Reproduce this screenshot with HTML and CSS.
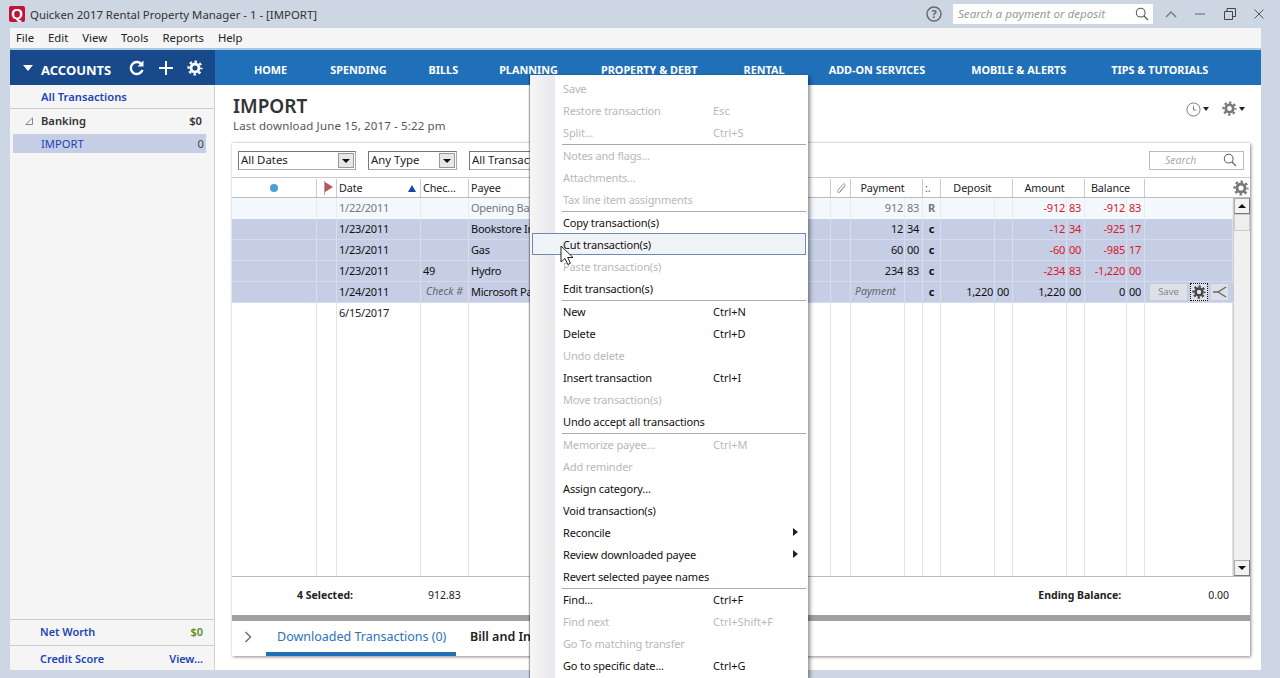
FILE: index.html
```html
<!DOCTYPE html>
<html lang="en">
<head>
<meta charset="utf-8">
<title>Quicken 2017 Rental Property Manager</title>
<link rel="stylesheet" href="styles.css">
</head>
<body>
<svg class="defs" width="0" height="0" aria-hidden="true">
  <symbol id="gear" viewBox="0 0 20 20">
    <circle cx="10" cy="10" r="5" fill="none" stroke="currentColor" stroke-width="3.6"/>
    <circle cx="10" cy="10" r="8" fill="none" stroke="currentColor" stroke-width="3" stroke-dasharray="3.14 3.14" stroke-dashoffset="1.57"/>
  </symbol>
  <symbol id="lens" viewBox="0 0 16 16">
    <circle cx="6.5" cy="6.5" r="5" fill="none" stroke="currentColor" stroke-width="1.2"/>
    <path d="M10 10l5 5" stroke="currentColor" stroke-width="1.5" fill="none"/>
  </symbol>
</svg>

<header class="titlebar">
  <span class="logo">Q</span>
  <span class="title">Quicken 2017 Rental Property Manager - 1 - [IMPORT]</span>
  <svg class="help" width="16" height="16" viewBox="0 0 16 16"><circle cx="8" cy="8" r="7" fill="none" stroke="#666" stroke-width="1.4"/><text x="8" y="12" text-anchor="middle" class="help-q">?</text></svg>
  <div class="globalsearch"><span>Search a payment or deposit</span><svg class="lens" width="14" height="14"><use href="#lens"/></svg></div>
  <svg class="winbtn up" width="14" height="10" viewBox="0 0 14 10"><path d="M2 8l5-5 5 5" fill="none" stroke="#777" stroke-width="1.4"/></svg>
  <svg class="winbtn min" width="10" height="10" viewBox="0 0 10 10"><path d="M0 5h10" stroke="#666"/></svg>
  <svg class="winbtn res" width="12" height="12" viewBox="0 0 12 12"><path d="M.5 3.5h8v8h-8zM3 3V.5h8.500v8H9" fill="none" stroke="#444"/></svg>
  <svg class="winbtn cls" width="10" height="10" viewBox="0 0 10 10"><path d="M.5.5l9 9M9.500.5l-9 9" stroke="#555"/></svg>
</header>

<nav class="menubar"><span>File</span><span>Edit</span><span>View</span><span>Tools</span><span>Reports</span><span>Help</span></nav>

<div class="shell">
  <div class="acc-head">
    <span class="tri-down"></span>
    <span class="acc-label">ACCOUNTS</span>
    <svg class="acc-ic refresh" width="18" height="18" viewBox="0 0 18 18"><path d="M14.500 11a6 6 0 1 1-.8-5.500" fill="none" stroke="#fff" stroke-width="2.400"/><path d="M15.500 1.500v6h-6z" fill="#fff"/></svg>
    <svg class="acc-ic plus" width="16" height="16" viewBox="0 0 16 16"><path d="M8 1v14M1 8h14" stroke="#fff" stroke-width="2"/></svg>
    <svg class="acc-ic gear-w" width="16" height="16"><use href="#gear"/></svg>
  </div>
  <nav class="topnav">
    <span>HOME</span><span>SPENDING</span><span>BILLS</span><span>PLANNING</span><span>PROPERTY &amp; DEBT</span><span>RENTAL</span><span>ADD-ON SERVICES</span><span>MOBILE &amp; ALERTS</span><span>TIPS &amp; TUTORIALS</span>
  </nav>

  <aside class="sidebar">
    <div class="side-all">All Transactions</div>
    <div class="side-group"><svg class="tw" width="8" height="8" viewBox="0 0 8 8"><path d="M7.500.8v6.700H.8z" fill="none" stroke="#888"/></svg><span class="grow">Banking</span><span>$0</span></div>
    <div class="side-sel"><span class="grow">IMPORT</span><span class="num">0</span></div>
    <div class="grow"></div>
    <div class="side-foot first"><span class="grow">Net Worth</span><span class="green">$0</span></div>
    <div class="side-foot last"><span class="grow">Credit Score</span><span>View...</span></div>
  </aside>

  <main class="main">
    <div class="pagehead">
      <div class="pagetitle">
        <h1>IMPORT</h1>
        <p>Last download June 15, 2017 - 5:22 pm</p>
      </div>
      <div class="pagetools">
        <svg width="15" height="15" viewBox="0 0 16 16"><circle cx="8" cy="8" r="7" fill="none" stroke="#777"/><path d="M8 4v4.500h3" fill="none" stroke="#777"/></svg><span class="caret"></span>
        <svg class="toolgear" width="15" height="15"><use href="#gear"/></svg><span class="caret"></span>
      </div>
    </div>

    <section class="card">
      <div class="filters">
        <div class="select s1"><span>All Dates</span><i></i></div>
        <div class="select s2"><span>Any Type</span><i></i></div>
        <div class="select s3"><span>All Transactions</span><i></i></div>
        <div class="search"><span>Search</span><svg width="14" height="14"><use href="#lens"/></svg></div>
      </div>

      <div class="cols head">
        <div class="c"><span class="dot"></span></div>
        <div class="c"><svg width="11" height="14" viewBox="0 0 11 14"><path d="M1.500 0v14" stroke="#aaa"/><path d="M2 1l8 5-8 5z" fill="#c0505c"/></svg></div>
        <div class="c datehead"><span>Date</span><span class="sort"></span></div>
        <div class="c">Chec...</div>
        <div class="c">Payee</div>
        <div class="c"><svg width="12" height="13" viewBox="0 0 12 13"><path d="M10 4L5 10c-1.500 1.600-3.500 0-2.200-1.600L8 2.200c1-1.200 2.700.2 1.700 1.500L4.800 9.500" fill="none" stroke="#999"/></svg></div>
        <div class="c hc span2">Payment</div>
        <div class="c clr">:.</div>
        <div class="c hc span2">Deposit</div>
        <div class="c hc span2">Amount</div>
        <div class="c hc span2">Balance</div>
        <div class="c headgear"><svg width="16" height="16"><use href="#gear"/></svg></div>
      </div>

      <div class="regbody">
        <div class="rows">
          <div class="cols row open">
            <div class="c"></div><div class="c"></div><div class="c">1/22/2011</div><div class="c"></div><div class="c">Opening Balance</div><div class="c"></div>
            <div class="c r">912</div><div class="c r">83</div><div class="c clr b">R</div><div class="c"></div><div class="c"></div>
            <div class="c r red">-912</div><div class="c r red">83</div><div class="c r red">-912</div><div class="c r red">83</div><div class="c"></div>
          </div>
          <div class="cols row sel">
            <div class="c"></div><div class="c"></div><div class="c">1/23/2011</div><div class="c"></div><div class="c">Bookstore Inc</div><div class="c"></div>
            <div class="c r">12</div><div class="c r">34</div><div class="c clr b">c</div><div class="c"></div><div class="c"></div>
            <div class="c r red">-12</div><div class="c r red">34</div><div class="c r red">-925</div><div class="c r red">17</div><div class="c"></div>
          </div>
          <div class="cols row sel">
            <div class="c"></div><div class="c"></div><div class="c">1/23/2011</div><div class="c"></div><div class="c">Gas</div><div class="c"></div>
            <div class="c r">60</div><div class="c r">00</div><div class="c clr b">c</div><div class="c"></div><div class="c"></div>
            <div class="c r red">-60</div><div class="c r red">00</div><div class="c r red">-985</div><div class="c r red">17</div><div class="c"></div>
          </div>
          <div class="cols row sel">
            <div class="c"></div><div class="c"></div><div class="c">1/23/2011</div><div class="c">49</div><div class="c">Hydro</div><div class="c"></div>
            <div class="c r">234</div><div class="c r">83</div><div class="c clr b">c</div><div class="c"></div><div class="c"></div>
            <div class="c r red">-234</div><div class="c r red">83</div><div class="c r red">-1,220</div><div class="c r red">00</div><div class="c"></div>
          </div>
          <div class="cols row sel">
            <div class="c"></div><div class="c"></div><div class="c">1/24/2011</div><div class="c hint ck">Check #</div><div class="c">Microsoft Payroll</div><div class="c"></div>
            <div class="c hint pay">Payment</div><div class="c"></div><div class="c clr b">c</div><div class="c r">1,220</div><div class="c r">00</div>
            <div class="c r">1,220</div><div class="c r">00</div><div class="c r">0</div><div class="c r">00</div>
            <div class="c actions">
              <span class="savebtn">Save</span>
              <span class="gearbtn"><svg width="14" height="14"><use href="#gear"/></svg></span>
              <span class="splitbtn"><svg width="14" height="12" viewBox="0 0 14 12"><path d="M0 6h5l8-5M5 6l8 5" fill="none" stroke="#666" stroke-width="1.400"/></svg></span>
            </div>
          </div>
          <div class="cols row">
            <div class="c"></div><div class="c"></div><div class="c">6/15/2017</div><div class="c"></div><div class="c"></div><div class="c"></div>
            <div class="c"></div><div class="c"></div><div class="c"></div><div class="c"></div><div class="c"></div>
            <div class="c"></div><div class="c"></div><div class="c"></div><div class="c"></div><div class="c"></div>
          </div>
          <div class="cols filler">
            <div class="c"></div><div class="c"></div><div class="c"></div><div class="c"></div><div class="c"></div><div class="c"></div>
            <div class="c"></div><div class="c"></div><div class="c"></div><div class="c"></div><div class="c"></div>
            <div class="c"></div><div class="c"></div><div class="c"></div><div class="c"></div><div class="c"></div>
          </div>
        </div>
        <div class="scroll">
          <div class="sbtn"><span class="tri-up"></span></div>
          <div class="thumb"></div>
          <div class="grow"></div>
          <div class="sbtn"><span class="tri-dn"></span></div>
        </div>
      </div>

      <div class="summary">
        <span class="sum-label">4 Selected:</span><span class="sum-val">912.83</span>
        <span class="grow"></span>
        <span class="sum-label">Ending Balance:</span><span class="sum-end">0.00</span>
      </div>
      <div class="splitter"></div>
      <div class="tabs">
        <svg class="chev" width="9" height="12" viewBox="0 0 9 12"><path d="M1.500 1l5 5-5 5" fill="none" stroke="#777" stroke-width="1.600"/></svg>
        <div class="tab active">Downloaded Transactions (0)</div>
        <div class="tab clipped">Bill and In</div>
      </div>
    </section>
  </main>
</div>

<div class="ctx">
  <div class="it off"><span>Save</span></div>
  <div class="it off"><span>Restore transaction</span><kbd>Esc</kbd></div>
  <div class="it off"><span>Split...</span><kbd>Ctrl+S</kbd></div>
  <hr>
  <div class="it off"><span>Notes and flags...</span></div>
  <div class="it off"><span>Attachments...</span></div>
  <div class="it off"><span>Tax line item assignments</span></div>
  <hr>
  <div class="it"><span>Copy transaction(s)</span></div>
  <div class="it hot"><span>Cut transaction(s)</span></div>
  <div class="it off"><span>Paste transaction(s)</span></div>
  <div class="it"><span>Edit transaction(s)</span></div>
  <hr>
  <div class="it"><span>New</span><kbd>Ctrl+N</kbd></div>
  <div class="it"><span>Delete</span><kbd>Ctrl+D</kbd></div>
  <div class="it off"><span>Undo delete</span></div>
  <div class="it"><span>Insert transaction</span><kbd>Ctrl+I</kbd></div>
  <div class="it off"><span>Move transaction(s)</span></div>
  <div class="it"><span>Undo accept all transactions</span></div>
  <hr>
  <div class="it off"><span>Memorize payee...</span><kbd>Ctrl+M</kbd></div>
  <div class="it off"><span>Add reminder</span></div>
  <div class="it"><span>Assign category...</span></div>
  <div class="it"><span>Void transaction(s)</span></div>
  <div class="it sub"><span>Reconcile</span></div>
  <div class="it sub"><span>Review downloaded payee</span></div>
  <div class="it"><span>Revert selected payee names</span></div>
  <hr>
  <div class="it"><span>Find...</span><kbd>Ctrl+F</kbd></div>
  <div class="it off"><span>Find next</span><kbd>Ctrl+Shift+F</kbd></div>
  <div class="it off"><span>Go To matching transfer</span></div>
  <div class="it"><span>Go to specific date...</span><kbd>Ctrl+G</kbd></div>
</div>
<svg class="cursor" width="14" height="21" viewBox="0 0 14 21"><path d="M1 1v16l4-3.500 2.800 6 2.600-1.200-2.700-5.800H13z" fill="#fff" stroke="#222" stroke-width="1"/></svg>
</body>
</html>
```
FILE: styles.css
```css
* { box-sizing: border-box; }
html, body { margin: 0; height: 678px; overflow: hidden; }
body {
  background: #ccd7e3;
  font: 11.4px/1 "Noto Sans", "Open Sans", sans-serif;
  color: #222;
  position: relative;
}
.defs { position: absolute; }
.grow { flex: 1; }
h1, p { margin: 0; }

/* Title bar */
.titlebar { height: 28px; display: flex; align-items: center; padding-left: 9px; }
.logo {
  width: 16px; height: 16px; background: #c2123a; color: #fff; border-radius: 2px;
  font: bold 15px/16px "Liberation Sans", sans-serif; text-align: center;
}
.title { margin-left: 5px; color: #333; flex: 1; padding-top: 1px; }
.help { margin-right: 11px; }
.help-q { font: bold 11px "Noto Sans", sans-serif; fill: #666; }
.globalsearch {
  width: 200px; height: 20px; background: #fff; display: flex; align-items: center;
  justify-content: space-between; padding: 0 4px 0 5px;
  font-style: italic; color: #999; font-size: 11.6px;
}
.lens { color: #555; }
.winbtn { flex: none; }
.up { margin-left: 11px; }
.min { margin-left: 17px; }
.res { margin-left: 19px; }
.cls { margin-left: 18px; margin-right: 16px; }

/* Menu bar */
.menubar {
  height: 20px; margin: 0 19px 0 10px; background: #f5f5f5; font-size: 11.3px;
  display: flex; align-items: center; gap: 14px; padding-left: 6px; color: #222;
}

/* Shell */
.shell {
  margin: 2px 19px 0 10px;
  display: grid; grid-template-columns: 205px 1fr; grid-template-rows: 35px 585px;
  box-shadow: 0 -2px 0 #a9c8e3;
}
.acc-head {
  background: #17498b; color: #fff; display: flex; align-items: center; padding-left: 13px;
}
.tri-down { width: 0; height: 0; border: 5.500px solid transparent; border-top: 6px solid #fff; border-bottom: 0; }
.acc-label { margin-left: 8px; padding-top: 6px; font-weight: 700; font-size: 13px; width: 76px; }
.acc-ic { flex: none; color: #fff; }
.refresh { margin-left: 11px; }
.plus { margin-left: 12px; }
.gear-w { margin-left: 13px; }

.topnav {
  background: #1f70b8; color: #fff; font-weight: 700; font-size: 10.85px;
  display: flex; align-items: center; gap: 43px; padding: 6px 0 0 39px; white-space: nowrap;
}
.topnav span:nth-child(3) { margin-left: -1px; }
.topnav span:nth-child(4) { margin-left: -2px; }
.topnav span:nth-child(6) { margin-left: 3px; }
.topnav span:nth-child(7) { margin-left: 1px; }
.topnav span:nth-child(8) { margin-left: 3px; }
.topnav span:nth-child(9) { margin-left: 2px; }

/* Sidebar */
.sidebar {
  background: #f5f5f5; border-right: 1px solid #d0d0d0;
  display: flex; flex-direction: column; font-weight: 600; font-size: 11.2px;
}
.side-all { height: 24px; line-height: 24px; padding-left: 31px; color: #1c44b8; border-bottom: 1px solid #ccc; }
.side-group { height: 25px; display: flex; align-items: center; padding: 0 12px 2px 15px; color: #333; }
.tw { margin-right: 8px; flex: none; }
.side-sel {
  height: 19px; margin: 0 8px 0 3px; background: #c5cee5; display: flex; align-items: center;
  padding: 0 2px 0 28px; color: #1c44b8; font-weight: 400;
}
.side-sel .num { color: #444; }
.side-foot { height: 25px; display: flex; align-items: center; padding: 0 11px 0 30px; color: #1c44b8; border-top: 1px solid #ccc; font-size: 10.9px; }
.side-foot.first { height: 26px; }
.side-foot.last { padding-top: 2px; }
.green { color: #5a8a18; }

/* Main */
.main { background: #fff; padding: 0 11px 14px 17px; display: flex; flex-direction: column; min-width: 0; }
.pagehead { height: 58px; display: flex; justify-content: space-between; flex: none; }
.pagetitle { padding: 11px 0 0 1px; }
h1 { font-size: 19px; line-height: 20px; font-weight: 600; color: #333; }
.pagetitle p { margin-top: 4px; font-size: 11.5px; color: #555; letter-spacing: .15px; }
.pagetools { display: flex; align-items: flex-start; padding: 17px 5px 0 0; color: #777; }
.caret { width: 0; height: 0; margin: 5px 0 0 2px; border: 3.5px solid transparent; border-top: 4px solid #222; border-bottom: 0; }
.toolgear { margin-left: 13px; margin-top: -1px; }

.card {
  flex: 1; display: flex; flex-direction: column; min-height: 0; background: #fff;
  box-shadow: 1px 1px 3px rgba(0,0,0,.45), 0 -1px 2px rgba(0,0,0,.08);
}
.filters { height: 35px; flex: none; display: flex; align-items: center; padding: 0 6px; border-bottom: 1px solid #ccc; }
.select {
  height: 19px; border: 1px solid #aaa; border-left-color: #777; border-top-color: #777; display: flex; align-items: center; justify-content: space-between;
  padding: 0 1px 0 2px; margin-right: 12px; color: #222;
}
.select i {
  width: 16px; height: 15px; background: #e8e8e8; border: 1px solid #999; display: block; position: relative;
}
.select i::after {
  content: ""; position: absolute; left: 3px; top: 5px; border: 4px solid transparent; border-top: 4px solid #111; border-bottom: 0;
}
.s1 { width: 118px; }
.s2 { width: 89px; }
.s3 { width: 160px; }
.search {
  margin-left: auto; width: 95px; height: 19px; border: 1px solid #bbb; display: flex; align-items: center;
  justify-content: space-between; padding: 0 6px 0 15px; font-style: italic; color: #aaa; font-size: 10.5px;
}
.search svg { color: #666; }

/* Register */
.cols {
  display: grid;
  grid-template-columns: 85px 20px 84px 48px 362px 20px 54px 18px 18px 54px 18px 54px 18px 42px 18px 1fr;
}
.c {
  border-right: 1px solid #e4e4e4; padding: 0 2px; overflow: hidden; white-space: nowrap;
  display: flex; align-items: center; min-width: 0;
}
.head { height: 20px; flex: none; border-bottom: 1px solid #bbb; color: #222; font-size: 10.8px; letter-spacing: -.1px; padding-top: 1px; }
.head .c { border-right-color: #ccc; }
.head .c:first-child { justify-content: center; padding-left: 2px; }
.head .c:nth-child(2) { padding: 0 0 0 6px; }
.head .c:nth-child(6) { justify-content: center; padding: 0; }
.span2 { grid-column: span 2; }
.hc { justify-content: center; padding-right: 10px; }
.dot { width: 8px; height: 8px; border-radius: 50%; background: #4a9fd8; }
.datehead { justify-content: space-between; padding-right: 4px; }
.sort { width: 0; height: 0; border-left: 4.500px solid transparent; border-right: 4.500px solid transparent; border-bottom: 7px solid #1a45b0; }
.head .clr { padding: 0 0 0 2px; color: #555; }
.headgear { border-right: 0 !important; justify-content: flex-end; color: #777; padding-right: 1px; }

.regbody { flex: 1; display: flex; min-height: 0; border-bottom: 1px solid #bbb; }
.rows { flex: 1; display: flex; flex-direction: column; min-width: 0; }
.row { height: 21px; flex: none; font-size: 11px; letter-spacing: -.25px; }
.row .c { padding-bottom: 2px; }
.filler { flex: 1; }
.open { background: #f3f8fd; color: #777; }
.sel { background: #c5cee5; color: #111; border-bottom: 1px solid #d5dbea; }
.sel .c { border-right-color: #d9deec; }
.open .c { border-right-color: #e9edf2; }
.row .r { justify-content: flex-end; padding-left: 0; padding-right: 1px; }
.row .r:nth-child(8), .row .r:nth-child(11), .row .r:nth-child(13), .row .r:nth-child(15) { padding-right: 3px; }
.red { color: #d9162a; }
.row .clr { justify-content: center; padding-left: 0; padding-right: 0; }
.b { font-weight: 700; }
.hint { font-style: italic; color: #666; font-size: 10.5px; letter-spacing: 0; }
.row .ck { justify-content: center; padding-left: 0; padding-right: 0; }
.row .pay { overflow: visible; padding-left: 4px; }
.row .actions { border-right: 0; padding: 0 0 0 5px; gap: 3px; overflow: visible; }
.savebtn { width: 37px; height: 16px; background: #dde0e6; color: #888; font-size: 9.5px; line-height: 16px; text-align: center; letter-spacing: 0; }
.gearbtn { width: 18px; height: 18px; border: 1px dotted #111; background: #dfe2ea; display: flex; align-items: center; justify-content: center; color: #444; }
.splitbtn { width: 17px; height: 16px; background: #dde0e6; display: flex; align-items: center; justify-content: center; }

.scroll { width: 17px; flex: none; background: #f0f0f0; border-left: 1px solid #ccc; display: flex; flex-direction: column; }
.sbtn { height: 16px; background: #f2f2f2; border: 1px solid #aaa; border-right-color: #777; border-bottom-color: #777; display: flex; align-items: center; justify-content: center; flex: none; }
.tri-up { border: 4px solid transparent; border-bottom: 4px solid #111; border-top: 0; }
.tri-dn { border: 4px solid transparent; border-top: 4px solid #111; border-bottom: 0; }
.thumb { height: 17px; background: #eee; border: 1px solid #ccc; flex: none; }

.summary { height: 38px; flex: none; display: flex; align-items: center; font-size: 10.5px; padding-bottom: 2px; }
.sum-label { font-weight: 700; color: #222; }
.summary .sum-label:first-child { margin-left: 65px; }
.sum-val { margin-left: 75px; }
.sum-end { margin-left: 87px; margin-right: 21px; }
.splitter { height: 6px; flex: none; background: #a0a0a0; }
.tabs { height: 35px; flex: none; display: flex; align-items: stretch; font-size: 12.5px; }
.chev { margin: 10px 13px 0 12px; flex: none; }
.tab { padding: 10px 11px 0; white-space: nowrap; font-weight: 600; color: #222; }
.tab.active { width: 190px; color: #2a75bb; font-weight: 400; border-bottom: 4px solid #1f70b8; }
.tab.clipped { padding-left: 14px; padding-right: 0; }

/* Context menu */
.ctx {
  position: absolute; left: 530px; top: 75px; width: 278px; height: 603px; overflow: hidden;
  padding: 2px 2px 0; background: linear-gradient(90deg, #f6f6f6 0, #e8e8ec 25px, #fff 25px);
  box-shadow: 2px 2px 4px rgba(0,0,0,.45), -1px 0 1px rgba(0,0,0,.3); font-size: 11px; letter-spacing: -.15px;
}
.it { height: 22px; display: flex; align-items: center; padding-left: 31px; color: #111; position: relative; white-space: nowrap; }
.it span { width: 150px; flex: none; }
.it kbd { font: inherit; letter-spacing: 0; }
.it.off { color: #b8b8b8; }
.hot { background: #f0f3f7; border: 1px solid #6f8bab; padding-left: 30px; }
.sub::after {
  content: ""; position: absolute; right: 8px; top: 7px; border: 4px solid transparent; border-left: 5px solid #222; border-right: 0;
}
.ctx hr { height: 1px; border: 0; margin: 1px 0 -1px 30px; background: #aaa; }
.cursor { position: absolute; left: 560px; top: 245px; }
```
